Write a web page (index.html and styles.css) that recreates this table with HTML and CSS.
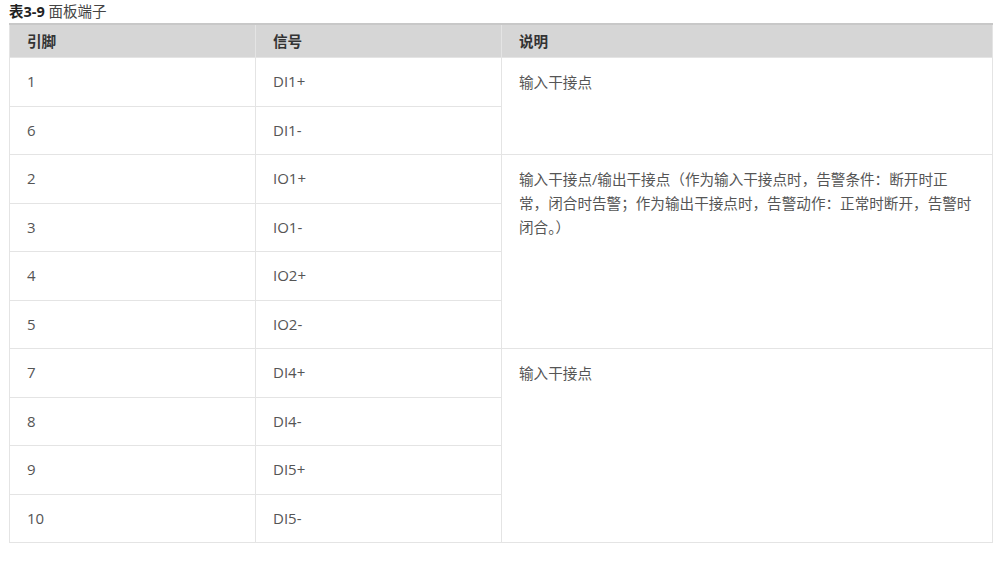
FILE: index.html
```html
<!DOCTYPE html>
<html lang="zh">
<head>
<meta charset="utf-8">
<link rel="stylesheet" href="styles.css">
</head>
<body>
<div class="wrap">
  <div class="caption"><b>表3-9</b> 面板端子</div>
  <table class="tbl">
    <colgroup><col class="c1"><col class="c2"><col class="c3"></colgroup>
    <thead>
      <tr><th>引脚</th><th>信号</th><th>说明</th></tr>
    </thead>
    <tbody>
      <tr><td>1</td><td>DI1+</td><td class="desc" rowspan="2">输入干接点</td></tr>
      <tr><td>6</td><td>DI1-</td></tr>
      <tr><td>2</td><td>IO1+</td><td class="desc" rowspan="4">输入干接点/输出干接点（作为输入干接点时，告警条件：断开时正常，闭合时告警；作为输出干接点时，告警动作：正常时断开，告警时闭合。）</td></tr>
      <tr><td>3</td><td>IO1-</td></tr>
      <tr><td>4</td><td>IO2+</td></tr>
      <tr><td>5</td><td>IO2-</td></tr>
      <tr><td>7</td><td>DI4+</td><td class="desc" rowspan="4">输入干接点</td></tr>
      <tr><td>8</td><td>DI4-</td></tr>
      <tr><td>9</td><td>DI5+</td></tr>
      <tr><td>10</td><td>DI5-</td></tr>
    </tbody>
  </table>
</div>
</body>
</html>
```

FILE: styles.css
```css
html, body {
  margin: 0;
  padding: 0;
  background: #ffffff;
}
body {
  font-family: "Open Sans", "Noto Sans CJK SC", sans-serif;
  color: #555555;
}
.wrap {
  padding: 0 8px 0 9px;
}
.caption {
  font-size: 14.5px;
  line-height: 23px;
  color: #444444;
}
.caption b {
  font-weight: bold;
  color: #222222;
}
.tbl {
  width: 983px;
  border-collapse: collapse;
  table-layout: fixed;
  font-size: 15px;
}
.c1, .c2 { width: 246px; }
.c3 { width: 491px; }
.tbl th {
  background: #d6d6d6;
  color: #333333;
  font-weight: bold;
  font-size: 14.6px;
  text-align: left;
  padding: 4px 17px;
  line-height: 24px;
  border: 1px solid #e4e4e4;
  border-top: 2px solid #c8c8c8;
}
.tbl td {
  padding: 12px 17px;
  line-height: 23.5px;
  border: 1px solid #e4e4e4;
  vertical-align: middle;
}
.tbl td.desc {
  vertical-align: top;
  font-size: 14.6px;
  line-height: 24px;
  padding-right: 19px;
}
```
